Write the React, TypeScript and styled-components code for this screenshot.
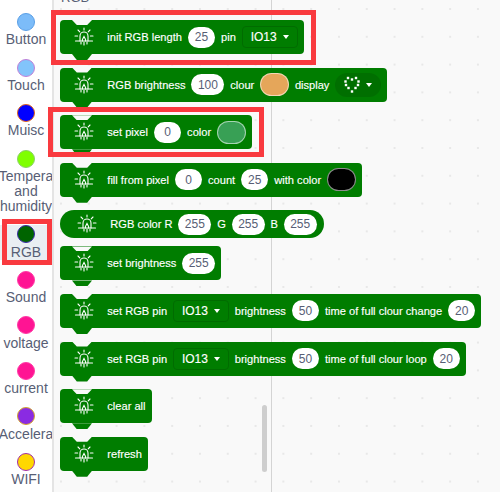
import React from "react";
import styled, { createGlobalStyle, css } from "styled-components";

const Global = createGlobalStyle`
  html, body { margin: 0; padding: 0; width: 500px; height: 492px; overflow: hidden; background: #f9f9f9; }
  #root { width: 500px; height: 492px; }
`;

const Page = styled.div`
  display: flex;
  width: 500px;
  height: 492px;
  overflow: hidden;
  font-family: "Liberation Sans", Arial, sans-serif;
`;

const Sidebar = styled.nav`
  flex: 0 0 52px;
  width: 52px;
  padding-top: 13px;
  background: #fff;
  border-right: 2px solid #e4e4e4;
  overflow: hidden;
  display: flex;
  flex-direction: column;
  gap: 11px;
`;

const Category = styled.div<{ $active?: boolean }>`
  position: relative;
  display: flex;
  flex-direction: column;
  align-items: center;
  gap: 1.3px;
  background: ${(p) => (p.$active ? "#e9eef2" : "transparent")};
  ${(p) =>
    p.$active &&
    css`
      &::after {
        content: "";
        position: absolute;
        top: -6px;
        bottom: -5px;
        left: 2px;
        right: 0;
        border: 5px solid #f93a3f;
      }
    `}
`;

const Dot = styled.span<{ $fill: string; $ring: string }>`
  box-sizing: border-box;
  width: 18px;
  height: 18px;
  border-radius: 50%;
  background: ${(p) => p.$fill};
  border: 1px solid ${(p) => p.$ring};
`;

const CategoryLabel = styled.span`
  font-size: 14px;
  line-height: 15.2px;
  color: #575e75;
  text-align: center;
  white-space: pre-line;
`;

const Flyout = styled.main`
  position: relative;
  flex: 1;
  display: flex;
  flex-direction: column;
  align-items: flex-start;
  gap: 13.6px;
  padding: 20px 0 0 6px;
  background-color: #f9f9f9;
  background-image: radial-gradient(circle at 1px 1px, #e8e8e8 1px, transparent 1.5px);
  background-size: 27.8px 27.8px;
  background-position: 6px 8px;
  &::before {
    content: "";
    position: absolute;
    left: 217px;
    top: 0;
    bottom: 0;
    width: 1px;
    background: #d4d4d4;
  }
`;

const Heading = styled.h2`
  position: absolute;
  top: -10px;
  left: 7px;
  margin: 0;
  font-size: 13px;
  line-height: 15px;
  font-weight: 400;
  color: #575e75;
`;

const Scroll = styled.div`
  position: absolute;
  left: 208px;
  top: 405px;
  width: 5px;
  height: 67px;
  border-radius: 3px;
  background: #cecece;
`;

const Block = styled.div<{ $tab?: boolean; $pill?: boolean }>`
  position: relative;
  box-sizing: border-box;
  height: ${(p) => (p.$pill ? "28px" : "34px")};
  display: flex;
  align-items: center;
  gap: 5.8px;
  padding: ${(p) => (p.$pill ? "0 7px 0 17px" : "0 6px 0 14px")};
  margin-bottom: ${(p) => (p.$pill ? "-5.6px" : "0")};
  background: #007d00;
  border-radius: ${(p) => (p.$pill ? "14px" : "4px")};
  color: #fff;
  font-size: 11.1px;
  -webkit-text-stroke: 0.15px #fff;
  white-space: nowrap;
  ${(p) =>
    p.$tab !== false &&
    css`
      &::before {
        content: "";
        position: absolute;
        left: 12px;
        top: 0;
        width: 20px;
        height: 5px;
        background: #f9f9f9;
        clip-path: polygon(0 0, 100% 0, 76% 100%, 24% 100%);
      }
      &::after {
        content: "";
        position: absolute;
        left: 12px;
        top: 100%;
        width: 20px;
        height: 6px;
        background: #007d00;
        clip-path: polygon(0 0, 100% 0, 76% 100%, 24% 100%);
      }
    `}
`;

const Mark = styled.div<{ $t: number; $r: number; $b: number; $l: number }>`
  position: absolute;
  z-index: 2;
  pointer-events: none;
  top: ${(p) => p.$t}px;
  right: ${(p) => p.$r}px;
  bottom: ${(p) => p.$b}px;
  left: ${(p) => p.$l}px;
  border: 5.5px solid #f93a3f;
`;

const IconSlot = styled.svg`
  flex: 0 0 20px;
  width: 20px;
  height: 20px;
  margin-right: 7.5px;
`;

const Num = styled.span`
  box-sizing: border-box;
  height: 21px;
  min-width: 27.5px;
  padding: 0 6.5px;
  border-radius: 11px;
  background: #fff;
  color: #575e75;
  font-size: 12px;
  -webkit-text-stroke: 0;
  display: inline-flex;
  align-items: center;
  justify-content: center;
`;

const Drop = styled.span`
  box-sizing: border-box;
  height: 22px;
  padding: 0 8px;
  display: inline-flex;
  align-items: center;
  gap: 6px;
  font-size: 12px;
  border: 1px solid #006c00;
  border-radius: 4px;
`;

const Caret = styled.i`
  width: 0;
  height: 0;
  border-left: 3.5px solid transparent;
  border-right: 3.5px solid transparent;
  border-top: 4px solid #fff;
`;

const Swatch = styled.span<{ $c: string }>`
  box-sizing: border-box;
  width: 29px;
  height: 23px;
  border-radius: 12px;
  background: ${(p) => p.$c};
  border: 1px solid rgba(255, 255, 255, 0.55);
`;

const Matrix = styled.span`
  height: 24px;
  width: 46px;
  box-sizing: border-box;
  padding: 0 9px 0 8px;
  border-radius: 12px;
  background: #006f00;
  display: inline-flex;
  align-items: center;
  justify-content: space-between;
`;

const MatrixGlyph = styled.svg`
  width: 18px;
  height: 18px;
`;

const Light = () => (
  <IconSlot viewBox="0 0 20 20" fill="none" stroke="#fff" strokeWidth="1.1" strokeLinecap="round">
    <path d="M6 14V9a4 4 0 0 1 8 0v5" />
    <path d="M8.4 14v-1.4L10 9.5l1.6 3.1V14" />
    <path d="M1.5 14h17" />
    <path d="M7 15v2M10 15v3M13 15v2" />
    <path d="M10 1v2M4 3l1.8 1.8M16 3l-1.8 1.8M1 9h2.6M16.4 9H19" />
  </IconSlot>
);

const heart = [
  [5, 2], [9, 3.5], [13, 2], [2.5, 5.5], [15.5, 5.5], [3, 9], [15, 9], [5.5, 12], [12.5, 12], [9, 15.5],
];

const Heart = () => (
  <MatrixGlyph viewBox="0 0 18 18">
    {heart.map(([x, y]) => (
      <rect key={`${x}-${y}`} x={x - 1.2} y={y - 1.2} width="2.4" height="2.4" fill="#fff" />
    ))}
  </MatrixGlyph>
);

const cats: { label: string; fill: string; ring: string; active?: boolean }[] = [
  { label: "Button", fill: "#7cbcf9", ring: "#5a9fe6" },
  { label: "Touch", fill: "#82c4fb", ring: "#c07fd8" },
  { label: "Muisc", fill: "#0000ff", ring: "#e3661a" },
  { label: "Tempera\nand\nhumidity", fill: "#7fff00", ring: "#8ccf6a" },
  { label: "RGB", fill: "#006400", ring: "#3a2aa8", active: true },
  { label: "Sound", fill: "#ff1493", ring: "#ff3aa6" },
  { label: "voltage", fill: "#ff1493", ring: "#ff3aa6" },
  { label: "current", fill: "#ff1493", ring: "#ff3aa6" },
  { label: "Accelera", fill: "#8a2be2", ring: "#d4a72c" },
  { label: "WIFI", fill: "#ffd700", ring: "#a22fa8" },
];

export default function App() {
  return (
    <Page>
      <Global />
      <Sidebar>
        {cats.map((c) => (
          <Category key={c.label} $active={c.active}>
            <Dot $fill={c.fill} $ring={c.ring} />
            <CategoryLabel>{c.label}</CategoryLabel>
          </Category>
        ))}
      </Sidebar>
      <Flyout>
        <Heading>RGB</Heading>
        <Block>
          <Mark $t={-10} $r={-12} $b={-11} $l={-9} />
          <Light />
          init RGB length <Num>25</Num> pin
          <Drop>IO13 <Caret /></Drop>
        </Block>
        <Block>
          <Light />
          RGB brightness <Num>100</Num> clour <Swatch $c="#e5a65a" /> display
          <Matrix><Heart /><Caret /></Matrix>
        </Block>
        <Block>
          <Mark $t={-8} $r={-12} $b={-8} $l={-12} />
          <Light />
          set pixel <Num>0</Num> color <Swatch $c="#38a055" />
        </Block>
        <Block>
          <Light />
          fill from pixel <Num>0</Num> count <Num>25</Num> with color <Swatch $c="#000000" />
        </Block>
        <Block $pill $tab={false}>
          <Light />
          RGB color R <Num>255</Num> G <Num>255</Num> B <Num>255</Num>
        </Block>
        <Block>
          <Light />
          set brightness <Num>255</Num>
        </Block>
        <Block>
          <Light />
          set RGB pin <Drop>IO13 <Caret /></Drop> brightness <Num>50</Num> time of full clour change <Num>20</Num>
        </Block>
        <Block>
          <Light />
          set RGB pin <Drop>IO13 <Caret /></Drop> brightness <Num>50</Num> time of full clour loop <Num>20</Num>
        </Block>
        <Block>
          <Light />
          clear all
        </Block>
        <Block>
          <Light />
          refresh
        </Block>
        <Scroll />
      </Flyout>
    </Page>
  );
}
